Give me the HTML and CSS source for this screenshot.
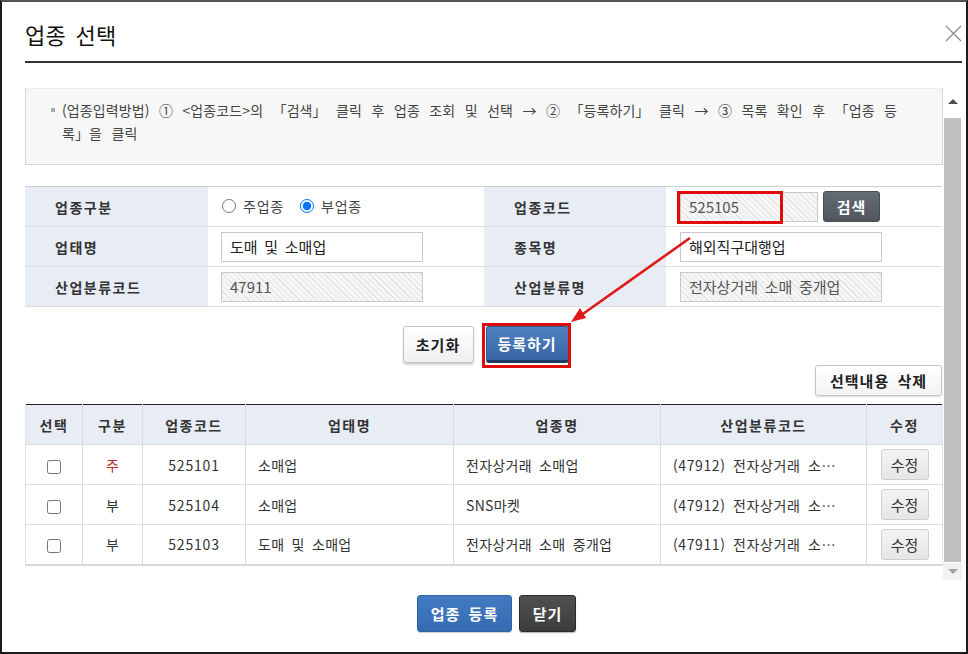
FILE: index.html
```html
<!DOCTYPE html>
<html lang="ko">
<head>
<meta charset="utf-8">
<title>업종 선택</title>
<link rel="stylesheet" href="styles.css">
</head>
<body>
<div class="modal">
  <div class="modal-head">
    <h1 class="modal-title">업종 선택</h1>
    <button class="close-btn" aria-label="닫기">
      <svg width="17" height="17" viewBox="0 0 17 17"><path d="M1 1 L16 16 M16 1 L1 16" stroke="#8a8a8a" stroke-width="1.2" fill="none"/></svg>
    </button>
  </div>
  <div class="head-line"></div>

  <div class="scroll-wrap">
    <div class="scroll-content">
      <div class="info">
        <p class="info-text"><span class="bullet"></span>(업종입력방법) ① &lt;업종코드&gt;의 「검색」 클릭 후 업종 조회 및 선택 → ② 「등록하기」 클릭 → ③ 목록 확인 후 「업종 등<br>록」을 클릭</p>
      </div>

      <table class="form-table">
        <colgroup><col class="c-lab"><col class="c-val"><col class="c-lab2"><col class="c-val"></colgroup>
        <tr>
          <th>업종구분</th>
          <td>
            <label class="radio"><input type="radio" name="kind"> 주업종</label>
            <label class="radio"><input type="radio" name="kind" checked> 부업종</label>
          </td>
          <th>업종코드</th>
          <td><div class="code-row"><input class="inp inp-code ro" type="text" value="525105" readonly><button class="btn-search">검색</button></div></td>
        </tr>
        <tr>
          <th>업태명</th>
          <td><input class="inp" type="text" value="도매 및 소매업"></td>
          <th>종목명</th>
          <td><input class="inp" type="text" value="해외직구대행업"></td>
        </tr>
        <tr>
          <th>산업분류코드</th>
          <td><input class="inp ro" type="text" value="47911" readonly></td>
          <th>산업분류명</th>
          <td><input class="inp ro" type="text" value="전자상거래 소매 중개업" readonly></td>
        </tr>
      </table>

      <div class="actions">
        <button class="btn btn-white">초기화</button>
        <button class="btn btn-blue-grad">등록하기</button>
      </div>

      <div class="del-row"><button class="btn btn-del">선택내용 삭제</button></div>

      <table class="list-table">
        <colgroup>
          <col style="width:57px"><col style="width:60px"><col style="width:103px"><col style="width:208px"><col style="width:207px"><col style="width:206px"><col style="width:76px">
        </colgroup>
        <thead>
          <tr><th>선택</th><th>구분</th><th>업종코드</th><th>업태명</th><th>업종명</th><th>산업분류코드</th><th>수정</th></tr>
        </thead>
        <tbody>
          <tr><td class="ctr"><input type="checkbox"></td><td class="ctr main">주</td><td class="ctr code">525101</td><td>소매업</td><td>전자상거래 소매업</td><td class="cls">(47912) 전자상거래 소⋯</td><td class="ctr"><button class="btn-edit">수정</button></td></tr>
          <tr><td class="ctr"><input type="checkbox"></td><td class="ctr">부</td><td class="ctr code">525104</td><td>소매업</td><td>SNS마켓</td><td class="cls">(47912) 전자상거래 소⋯</td><td class="ctr"><button class="btn-edit">수정</button></td></tr>
          <tr><td class="ctr"><input type="checkbox"></td><td class="ctr">부</td><td class="ctr code">525103</td><td>도매 및 소매업</td><td>전자상거래 소매 중개업</td><td class="cls">(47911) 전자상거래 소⋯</td><td class="ctr"><button class="btn-edit">수정</button></td></tr>
        </tbody>
      </table>
    </div>
    <div class="scrollbar">
      <div class="sb-arrow sb-up"></div>
      <div class="sb-track"><div class="sb-thumb"></div></div>
      <div class="sb-arrow sb-down"></div>
    </div>
  </div>

  <div class="footer">
    <button class="btn btn-blue">업종 등록</button>
    <button class="btn btn-dark">닫기</button>
  </div>

  <div class="annot">
    <div class="redbox redbox-code"></div>
    <div class="redbox redbox-reg"></div>
    <svg class="annot-arrow" width="964" height="650" viewBox="0 0 964 650">
      <line x1="688" y1="236" x2="578" y2="314" stroke="#e01a1a" stroke-width="2.6"/>
      <polygon points="569,320 578,306 584,316" fill="#e01a1a"/>
    </svg>
  </div>
</div>
</body>
</html>
```

FILE: styles.css
```css
* { box-sizing: border-box; }
html, body { margin: 0; padding: 0; background: #fff; }
body {
  font-family: "Noto Sans CJK KR", "Noto Sans", sans-serif;
  font-size: 14px;
  color: #333;
  word-spacing: 3px;
}
button, input { font-family: inherit; word-spacing: inherit; }

.modal {
  position: relative;
  width: 968px;
  height: 654px;
  border: 2px solid #1c1c1c;
  border-top-color: #555;
  background: #fff;
  overflow: hidden;
}

.modal-head {
  display: flex;
  justify-content: space-between;
  align-items: flex-start;
  height: 59px;
  padding: 0 4px 0 23px;
}
.modal-title {
  margin: 0;
  padding-top: 19px;
  font-size: 22px;
  line-height: 26px;
  font-weight: 400;
  color: #111;
  word-spacing: 3px;
  letter-spacing: 0.3px;
}
.close-btn {
  margin-top: 23px;
  padding: 0;
  border: 0;
  background: none;
  width: 17px;
  height: 17px;
  line-height: 0;
}

.head-line {
  height: 2px;
  background: #333;
  margin: 0 4px 0 23px;
}

.scroll-wrap {
  display: flex;
  margin: 25px 4px 0 23px;
  height: 492px;
}
.scroll-content {
  width: 918px;
  flex: none;
}

.info {
  height: 77px;
  background: #f7f7f7;
  border: 1px solid #d4d4d4;
  border-top-color: #ececec;
  padding: 10px 10px 0 36px;
}
.info-text {
  margin: 0;
  line-height: 23px;
  font-size: 14px;
  color: #444;
  word-spacing: 5.4px;
  letter-spacing: 0.1px;
  text-indent: -11px;
}
.bullet {
  display: inline-block;
  width: 4px;
  height: 4px;
  background: #aaa;
  vertical-align: middle;
  margin-right: 7px;
  position: relative;
  top: -2px;
}

.form-table {
  width: 917px;
  margin-top: 21px;
  border-collapse: collapse;
  table-layout: fixed;
  border-top: 1px solid #cfcfcf;
}
.form-table .c-lab { width: 183px; }
.form-table .c-lab2 { width: 182px; }
.form-table .c-val { width: 276px; }
.form-table tr { height: 40px; }
.form-table th, .form-table td {
  border-bottom: 1px solid #dcdcdc;
  padding: 0;
}
.form-table th {
  background: #e8edf5;
  text-align: left;
  padding-left: 30px;
  font-weight: 700;
  font-size: 14px;
  letter-spacing: 1.5px;
  color: #333;
}
.form-table td { padding-left: 13px; }
.form-table td:last-child { padding-left: 14px; }

.radio {
  display: inline-flex;
  align-items: center;
  margin-right: 8px;
  font-size: 14px;
  color: #444;
  letter-spacing: 0.8px;
}
.radio input {
  margin: 0 7px 0 1px;
  width: 14px;
  height: 14px;
}

.inp {
  display: block;
  width: 202px;
  height: 30px;
  border: 1px solid #c9c9c9;
  background: #fff;
  padding: 0 8px;
  font-size: 15px;
  color: #222;
  word-spacing: 2.5px;
  outline: none;
}
.inp.ro {
  color: #555;
  background: repeating-linear-gradient(45deg, #f6f6f6 0, #f6f6f6 3px, #e4e4e4 3px, #e4e4e4 4px);
}
.code-row { display: flex; align-items: center; gap: 5px; }
.inp-code { width: 138px; }
.btn-search {
  width: 57px;
  height: 31px;
  border: 1px solid #474d54;
  border-radius: 3px;
  background: linear-gradient(#646b73, #50565d);
  color: #fff;
  font-weight: 700;
  font-size: 15px;
  letter-spacing: 1px;
  padding: 0;
}

.btn {
  height: 37px;
  padding: 0;
  border-radius: 3px;
  font-size: 15px;
  font-weight: 700;
  letter-spacing: 1px;
  cursor: pointer;
}
.actions {
  display: flex;
  justify-content: center;
  gap: 12px;
  margin-top: 19px;
  padding-left: 3px;
}
.btn-white {
  width: 71px;
  border: 1px solid #c4c4c4;
  background: linear-gradient(#ffffff, #f0f0f0);
  color: #222;
  box-shadow: 0 2px 2px rgba(0,0,0,0.18);
}
.btn-blue-grad {
  width: 83px;
  border: 1px solid #2f5a90;
  border-bottom: 3px solid #1d3a62;
  background: linear-gradient(#4f80c0, #3866a4);
  color: #fff;
}
.del-row {
  display: flex;
  justify-content: flex-end;
  margin-top: 2px;
  padding-right: 1px;
}
.btn-del {
  width: 127px;
  height: 31px;
  border: 1px solid #c4c4c4;
  background: linear-gradient(#ffffff, #f3f3f3);
  color: #222;
  box-shadow: 0 1px 2px rgba(0,0,0,0.15);
}

.list-table {
  width: 917px;
  margin-top: 8px;
  border-collapse: collapse;
  table-layout: fixed;
  border-top: 1px solid #222;
  border-bottom: 2px solid #d9d9d9;
}
.list-table th, .list-table td {
  border-left: 1px solid #dcdcdc;
  border-bottom: 1px solid #dcdcdc;
  padding: 0 12px;
  white-space: nowrap;
  overflow: hidden;
}
.list-table th:first-child, .list-table td:first-child { border-left-color: #e6e6e6; }
.list-table th:last-child, .list-table td:last-child { border-right: 1px solid #e6e6e6; }
.list-table thead tr { height: 40px; }
.list-table tbody tr { height: 40px; }
.list-table th {
  background: #e8edf5;
  font-weight: 700;
  letter-spacing: 1.5px;
  color: #333;
  text-align: center;
  padding: 0;
}
.list-table td {
  font-size: 14px;
  color: #333;
  text-align: left;
  letter-spacing: 0.3px;
}
.list-table td.cls { letter-spacing: 0.6px; }
.list-table td.ctr { text-align: center; padding: 0; }
.list-table td.code { letter-spacing: 0.8px; }
.list-table td.main { color: #c0282d; }
.list-table input[type="checkbox"] {
  width: 14px;
  height: 14px;
  margin: 0;
  vertical-align: middle;
}
.btn-edit {
  width: 48px;
  height: 31px;
  border: 1px solid #cfcfcf;
  border-radius: 3px;
  background: linear-gradient(#f3f3f3, #e6e6e6);
  color: #333;
  font-size: 15px;
  padding: 0;
  vertical-align: middle;
}

.scrollbar {
  width: 19px;
  flex: none;
  display: flex;
  flex-direction: column;
  background: #f1f1f1;
}
.sb-arrow {
  height: 17px;
  display: flex;
  align-items: center;
  justify-content: center;
}
.sb-up { height: 26px; background: #fff; }
.sb-up::before {
  content: "";
  border-left: 5px solid transparent;
  border-right: 5px solid transparent;
  border-bottom: 5px solid #505050;
}
.sb-down::before {
  content: "";
  border-left: 5px solid transparent;
  border-right: 5px solid transparent;
  border-top: 5px solid #a3a3a3;
}
.sb-track {
  flex: 1;
  padding: 4px 1px 0;
  background: #fff;
}
.sb-thumb {
  height: 444px;
  background: #c1c1c1;
}

.footer {
  display: flex;
  justify-content: center;
  gap: 7px;
  margin-top: 15px;
  padding-left: 25px;
}
.btn-blue {
  width: 95px;
  border: 1px solid #2f63a4;
  background: linear-gradient(#427bc2, #356bb0);
  color: #fff;
  box-shadow: 0 1px 1px rgba(0,0,0,0.2);
}
.btn-dark {
  width: 57px;
  border: 1px solid #2a2a2a;
  background: linear-gradient(#505050, #3c3c3c);
  color: #fff;
  box-shadow: 0 1px 1px rgba(0,0,0,0.3);
}

.annot {
  position: absolute;
  inset: 0;
  pointer-events: none;
}
.redbox {
  position: absolute;
  border: 3px solid #e00b0b;
}
.redbox-code { left: 675px; top: 189px; width: 106px; height: 33px; }
.redbox-reg { left: 480px; top: 321px; width: 89px; height: 45px; }
.annot-arrow { position: absolute; left: 0; top: 0; }
```
